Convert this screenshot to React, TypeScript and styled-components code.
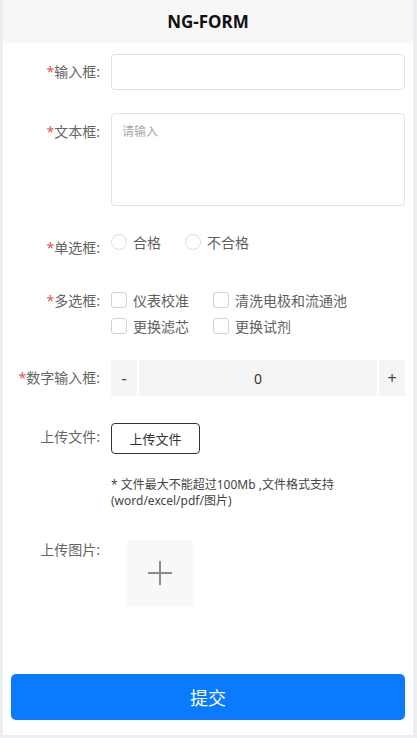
import React from "react";
import styled, { createGlobalStyle } from "styled-components";

const Global = createGlobalStyle`
  html, body { margin: 0; padding: 0; background: #eceef1; }
  body { font-family: "Noto Sans", "Noto Sans CJK SC", sans-serif; }
  * { box-sizing: border-box; }
`;

const Page = styled.div`
  margin: 0 4px 3px 3px;
  min-height: 735px;
  background: #fff;
  display: flex;
  flex-direction: column;
`;

const Header = styled.header`
  height: 43px;
  background: #f7f7f7;
  display: flex;
  align-items: center;
  justify-content: center;
  font-size: 17px;
  font-weight: 700;
  color: #111;
`;

const Body = styled.main`
  padding: 11px 8px 0 0;
  display: flex;
  flex-direction: column;
`;

const Row = styled.div<{ $mt: number }>`
  display: flex;
  align-items: flex-start;
  margin-top: ${(p) => p.$mt}px;
`;

const Label = styled.div<{ $pt: number; $lh?: number }>`
  width: 97px;
  flex: none;
  text-align: right;
  margin-right: 11px;
  padding-top: ${(p) => p.$pt}px;
  font-size: 14px;
  line-height: ${(p) => p.$lh ?? 20}px;
  color: #646566;
  white-space: nowrap;
`;

const Star = styled.span`
  color: #e45656;
`;

const Control = styled.div`
  flex: 1;
  min-width: 0;
`;

const TextInput = styled.input`
  display: block;
  width: 100%;
  height: 36px;
  border: 1px solid #e2e2e2;
  border-radius: 4px;
  padding: 0 10px;
  font-size: 14px;
  font-family: inherit;
  outline: none;
`;

const TextArea = styled.textarea`
  display: block;
  width: 100%;
  height: 93px;
  border: 1px solid #e2e2e2;
  border-radius: 4px;
  padding: 8px 10px;
  font-size: 12px;
  font-family: inherit;
  resize: none;
  outline: none;
  &::placeholder { color: #a8a8a8; }
`;

const OptionGroup = styled.div<{ $cols: string; $rowGap: number }>`
  display: grid;
  grid-template-columns: ${(p) => p.$cols};
  row-gap: ${(p) => p.$rowGap}px;
`;

const Option = styled.label`
  display: flex;
  align-items: center;
  height: 20px;
  font-size: 14px;
  color: #5f6062;
  white-space: nowrap;
`;

const RadioDot = styled.span`
  width: 16px;
  height: 16px;
  border: 1px solid #dcdcdc;
  border-radius: 50%;
  margin-right: 6px;
  flex: none;
`;

const CheckBox = styled.span`
  width: 16px;
  height: 16px;
  border: 1px solid #d2d2d2;
  border-radius: 3px;
  margin-right: 6px;
  flex: none;
`;

const Stepper = styled.div`
  display: flex;
  height: 36px;
  gap: 2px;
`;

const StepBtn = styled.button`
  width: 26px;
  flex: none;
  border: none;
  background: #f5f5f5;
  font-size: 16px;
  color: #444;
  padding: 0;
  font-family: inherit;
`;

const StepValue = styled.div`
  flex: 1;
  background: #f5f5f5;
  display: flex;
  align-items: center;
  justify-content: center;
  font-size: 14px;
  color: #333;
`;

const UploadButton = styled.button`
  width: 89px;
  height: 31px;
  border: 1px solid #333;
  border-radius: 4px;
  background: #fff;
  font-size: 13px;
  color: #333;
  font-family: inherit;
  padding: 0;
`;

const Hint = styled.div`
  margin: 23px 0 0 108px;
  font-size: 12px;
  line-height: 16px;
  color: #444;
`;

const ImageBox = styled.div`
  margin-left: 16px;
  width: 66px;
  height: 66px;
  background: #f7f8fa;
  display: flex;
  align-items: center;
  justify-content: center;
`;

const Footer = styled.div`
  margin-top: auto;
  padding: 0 8px 15px 8px;
`;

const Submit = styled.button`
  width: 100%;
  height: 46px;
  border: none;
  border-radius: 5px;
  background: #0a7bff;
  color: #fff;
  font-size: 18px;
  font-family: inherit;
`;

export default function App() {
  return (
    <>
      <Global />
      <Page>
        <Header>NG-FORM</Header>
        <Body>
          <Row $mt={0}>
            <Label $pt={0} $lh={36}><Star>*</Star>输入框:</Label>
            <Control><TextInput /></Control>
          </Row>
          <Row $mt={23}>
            <Label $pt={9}><Star>*</Star>文本框:</Label>
            <Control><TextArea placeholder="请输入" /></Control>
          </Row>
          <Row $mt={26}>
            <Label $pt={6}><Star>*</Star>单选框:</Label>
            <Control>
              <OptionGroup $cols="74px auto" $rowGap={0}>
                <Option><RadioDot />合格</Option>
                <Option><RadioDot />不合格</Option>
              </OptionGroup>
            </Control>
          </Row>
          <Row $mt={32}>
            <Label $pt={1}><Star>*</Star>多选框:</Label>
            <Control>
              <OptionGroup $cols="102px auto" $rowGap={6}>
                <Option><CheckBox />仪表校准</Option>
                <Option><CheckBox />清洗电极和流通池</Option>
                <Option><CheckBox />更换滤芯</Option>
                <Option><CheckBox />更换试剂</Option>
              </OptionGroup>
            </Control>
          </Row>
          <Row $mt={24}>
            <Label $pt={0} $lh={36}><Star>*</Star>数字输入框:</Label>
            <Control>
              <Stepper>
                <StepBtn>-</StepBtn>
                <StepValue>0</StepValue>
                <StepBtn>+</StepBtn>
              </Stepper>
            </Control>
          </Row>
          <Row $mt={27}>
            <Label $pt={4}>上传文件:</Label>
            <Control><UploadButton>上传文件</UploadButton></Control>
          </Row>
          <Hint>
            * 文件最大不能超过100Mb ,文件格式支持
            <br />
            (word/excel/pdf/图片)
          </Hint>
          <Row $mt={31}>
            <Label $pt={0}>上传图片:</Label>
            <Control>
              <ImageBox>
                <svg width="26" height="26" viewBox="0 0 26 26">
                  <path d="M13 1v24M1 13h24" stroke="#8c8c8c" strokeWidth="2" fill="none" />
                </svg>
              </ImageBox>
            </Control>
          </Row>
        </Body>
        <Footer>
          <Submit>提交</Submit>
        </Footer>
      </Page>
    </>
  );
}
